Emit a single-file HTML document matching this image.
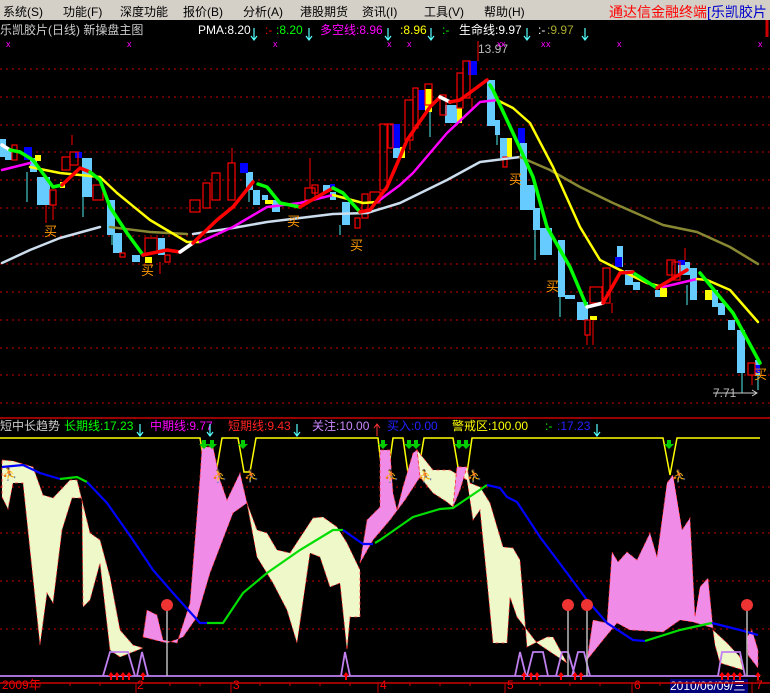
<!DOCTYPE html>
<html><head><meta charset="utf-8"><style>
*{margin:0;padding:0}
body{width:770px;height:693px;background:#000;overflow:hidden;position:relative;font-family:"Liberation Sans","Noto Sans CJK SC",sans-serif;font-size:12px}
.t{position:absolute;white-space:nowrap;line-height:14px}
#menu{position:absolute;left:0;top:0;width:770px;height:20px;background:#d4d0c8}
#menu span{position:absolute;top:3px;font-size:12px;color:#000}
</style></head><body>
<div id="menu">
<span style="left:3px">系统(S)</span><span style="left:63px">功能(F)</span><span style="left:120px">深度功能</span><span style="left:183px">报价(B)</span><span style="left:243px">分析(A)</span><span style="left:300px">港股期货</span><span style="left:362px">资讯(I)</span><span style="left:424px">工具(V)</span><span style="left:484px">帮助(H)</span>
<span style="left:609px;color:#f00;font-size:14px;top:2px">通达信金融终端</span><span style="left:707px;color:#00c;font-size:14px;top:2px">[乐凯胶片</span>
</div>
<div class="t" style="left:0;top:23px;color:#ccc">乐凯胶片(日线) 新操盘主图</div>
<div class="t" style="left:198px;top:23px;color:#fff">PMA:8.20</div>
<div class="t" style="left:265px;top:23px;color:#f00">:-</div><div class="t" style="left:276px;top:23px;color:#0f0">:8.20</div>
<div class="t" style="left:320px;top:23px;color:#f0f">多空线:8.96</div>
<div class="t" style="left:400px;top:23px;color:#ff0">:8.96</div>
<div class="t" style="left:442px;top:23px;color:#0f0">:-</div>
<div class="t" style="left:459px;top:23px;color:#fff">生命线:9.97</div>
<div class="t" style="left:538px;top:23px;color:#fff">:-</div><div class="t" style="left:547px;top:23px;color:#aa3">:9.97</div>

<div class="t" style="left:0;top:419px;color:#ccc">短中长趋势</div>
<div class="t" style="left:64px;top:419px;color:#0f0">长期线:17.23</div>
<div class="t" style="left:150px;top:419px;color:#f0f">中期线:9.77</div>
<div class="t" style="left:228px;top:419px;color:#f22">短期线:9.43</div>
<div class="t" style="left:312px;top:419px;color:#c8f">关注:10.00</div>
<div class="t" style="left:387px;top:419px;color:#22f">买入:0.00</div>
<div class="t" style="left:452px;top:419px;color:#ff0">警戒区:100.00</div>
<div class="t" style="left:545px;top:419px;color:#0f0">:-</div><div class="t" style="left:557px;top:419px;color:#22f">:17.23</div>

<div class="t" style="left:478px;top:42px;color:#bbb">13.97</div>
<div class="t" style="left:713px;top:386px;color:#bbb">7.71</div>

<div class="t" style="left:2px;top:678px;color:#f00">2009年</div>
<div class="t" style="left:137px;top:678px;color:#f00">2</div>
<div class="t" style="left:233px;top:678px;color:#f00">3</div>
<div class="t" style="left:380px;top:678px;color:#f00">4</div>
<div class="t" style="left:507px;top:678px;color:#f00">5</div>
<div class="t" style="left:634px;top:678px;color:#f00">6</div>
<div class="t" style="left:670px;top:679px;width:78px;height:14px;background:#00007a;color:#fff">2010/06/09/三</div>
<div class="t" style="left:756px;top:678px;color:#f00">7</div>

<svg width="770" height="693" style="position:absolute;left:0;top:0" xmlns="http://www.w3.org/2000/svg">
<g stroke="#5ff" stroke-width="1.2" fill="none">
<path d="M254 28v12M251 36l3 4 3-4M309 28v12M306 36l3 4 3-4M388 28v12M385 36l3 4 3-4M431 28v12M428 36l3 4 3-4M527 28v12M524 36l3 4 3-4M585 28v12M582 36l3 4 3-4"/>
<path d="M140 424v12M137 432l3 4 3-4M210 424v12M207 432l3 4 3-4M297 424v12M294 432l3 4 3-4M597 424v12M594 432l3 4 3-4"/>
</g>
<path d="M377 424v12M374 428l3-4 3 4" stroke="#f33" fill="none"/>
<line x1="767" y1="20" x2="767" y2="37" stroke="#c00" stroke-width="3"/>
<line x1="0" y1="418" x2="770" y2="418" stroke="#c00" stroke-width="1.5"/>
<line x1="0" y1="683" x2="770" y2="683" stroke="#c00" stroke-width="1.5"/>
<g stroke="#c00" stroke-width="1"><path d="M136 683v10M231 683v10M378 683v10M505 683v10M632 683v10M752 683v10M40 683v3M70 683v3M100 683v3M170 683v3M200 683v3M260 683v3M290 683v3M320 683v3M350 683v3M410 683v3M440 683v3M470 683v3M540 683v3M570 683v3M600 683v3M660 683v3M700 683v3"/></g>
<g stroke="#c00" stroke-dasharray="2,4" stroke-width="1">
<path d="M0 69H770M0 97H770M0 125H770M0 152H770M0 180H770M0 208H770M0 236H770M0 264H770M0 292H770M0 320H770M0 348H770M0 375H770M0 403H770"/>
<path d="M0 487H770M0 533H770M0 581H770M0 629H770"/>
</g>
<g fill="#f0f" font-size="9"><text x="6" y="47">x</text><text x="127" y="47">x</text><text x="273" y="47">x</text><text x="387" y="47">x</text><text x="407" y="47">x</text><text x="497" y="47">x</text><text x="501" y="47">x</text><text x="541" y="47">x</text><text x="546" y="47">x</text><text x="617" y="47">x</text><text x="758" y="47">x</text></g>
<!-- candles cyan -->
<g fill="#66ccff">
<rect x="0" y="139" width="6" height="18"/><rect x="5" y="150" width="7" height="10"/><rect x="30" y="158" width="7" height="14"/><rect x="37" y="177" width="13" height="28"/><rect x="82" y="158" width="10" height="39"/><rect x="107" y="200" width="8" height="35"/><rect x="113" y="233" width="9" height="20"/><rect x="132" y="255" width="8" height="7"/><rect x="158" y="238" width="7" height="17"/><rect x="246" y="172" width="7" height="18"/><rect x="253" y="190" width="7" height="15"/><rect x="262" y="195" width="6" height="5"/><rect x="272" y="200" width="8" height="12"/><rect x="323" y="185" width="7" height="7"/><rect x="330" y="192" width="6" height="8"/><rect x="342" y="202" width="8" height="23"/><rect x="393" y="148" width="7" height="10"/><rect x="445" y="105" width="12" height="18"/><rect x="487" y="80" width="8" height="46"/><rect x="495" y="120" width="5" height="15"/><rect x="500" y="138" width="7" height="20"/><rect x="520" y="143" width="7" height="67"/><rect x="527" y="185" width="8" height="25"/><rect x="533" y="208" width="7" height="22"/><rect x="540" y="228" width="12" height="27"/><rect x="558" y="240" width="7" height="57"/><rect x="565" y="295" width="10" height="4"/><rect x="577" y="302" width="11" height="18"/><rect x="617" y="246" width="6" height="21"/><rect x="625" y="270" width="8" height="15"/><rect x="633" y="282" width="7" height="8"/><rect x="655" y="290" width="7" height="7"/><rect x="678" y="262" width="12" height="13"/><rect x="690" y="268" width="7" height="32"/><rect x="712" y="290" width="6" height="17"/><rect x="718" y="303" width="7" height="12"/><rect x="728" y="320" width="7" height="10"/><rect x="737" y="330" width="8" height="43"/><rect x="755" y="360" width="5" height="15"/>
</g>
<g stroke="#5ee" stroke-width="1"><path d="M27 172v30M83 197v20M112 235v10M249 190v12M340 225v10M430 112v25M497 135v10M535 230v30M560 297v20M687 285v20M742 373v20M758 375v15"/></g>
<g fill="#ff0"><rect x="35" y="155" width="6" height="6"/><rect x="145" y="257" width="7" height="6"/><rect x="265" y="200" width="8" height="4"/><rect x="400" y="147" width="5" height="11"/><rect x="425" y="89" width="7" height="23"/><rect x="457" y="108" width="5" height="15"/><rect x="507" y="138" width="5" height="19"/><rect x="590" y="316" width="7" height="4"/><rect x="660" y="288" width="7" height="9"/><rect x="705" y="290" width="7" height="10"/><rect x="60" y="182" width="5" height="6"/></g>
<g fill="#00f"><rect x="24" y="147" width="8" height="13"/><rect x="75" y="152" width="7" height="6"/><rect x="240" y="163" width="8" height="10"/><rect x="330" y="184" width="5" height="6"/><rect x="392" y="124" width="8" height="24"/><rect x="418" y="90" width="7" height="20"/><rect x="468" y="61" width="9" height="14"/><rect x="518" y="128" width="7" height="15"/><rect x="615" y="257" width="7" height="10"/><rect x="678" y="260" width="7" height="5"/><rect x="755" y="365" width="5" height="8"/></g>
<g fill="none" stroke="#f00" stroke-width="1.2">
<rect x="12" y="145" width="5" height="15"/><rect x="50" y="190" width="6" height="15"/><rect x="62" y="157" width="8" height="13"/><rect x="70" y="152" width="8" height="13"/><rect x="93" y="185" width="10" height="15"/><rect x="120" y="253" width="5" height="4"/><rect x="145" y="238" width="12" height="15"/><rect x="165" y="255" width="5" height="7"/><rect x="190" y="200" width="10" height="12"/><rect x="203" y="183" width="7" height="25"/><rect x="212" y="173" width="8" height="27"/><rect x="228" y="163" width="7" height="37"/><rect x="305" y="188" width="10" height="12"/><rect x="312" y="185" width="6" height="8"/><rect x="355" y="218" width="5" height="10"/><rect x="362" y="194" width="6" height="24"/><rect x="370" y="192" width="10" height="11"/><rect x="380" y="124" width="7" height="66"/><rect x="388" y="124" width="5" height="24"/><rect x="405" y="100" width="8" height="40"/><rect x="413" y="88" width="5" height="40"/><rect x="425" y="84" width="7" height="21"/><rect x="440" y="95" width="6" height="20"/><rect x="457" y="73" width="6" height="35"/><rect x="463" y="61" width="7" height="37"/><rect x="503" y="157" width="4" height="10"/><rect x="585" y="320" width="5" height="15"/><rect x="590" y="287" width="12" height="16"/><rect x="603" y="268" width="7" height="35"/><rect x="667" y="260" width="8" height="15"/><rect x="672" y="262" width="8" height="18"/><rect x="748" y="363" width="7" height="12"/>
</g>
<g stroke="#f00" stroke-width="1"><path d="M46 205v18M53 205v15M160 262v12M72 145v-10M232 163v-15M310 188v-30M478 61v-20M587 335v10M612 303v10M727 215v0M593 320v25M752 375v10M685 260v-12M410 140v10M472 98v12"/></g>
<!-- MAs -->
<g fill="none" stroke-width="2.5" stroke-linejoin="round" stroke-linecap="round">
<polyline stroke="#cde" points="2,263 30,250 60,238 100,227"/>
<polyline stroke="#888833" points="110,227 150,232 187,234"/>
<polyline stroke="#cde" points="193,234 233,228 267,222 333,214 367,213 400,203 447,180 480,162 520,157"/>
<polyline stroke="#888833" points="520,157 550,170 580,187 613,203 663,225 697,232 730,247 758,264"/>
<polyline stroke="#f0f" points="2,170 30,163"/>
<polyline stroke="#ff0" points="30,167 60,173 100,177 117,193 150,220 187,242 200,242"/>
<polyline stroke="#f0f" points="200,242 233,227 267,207 300,203 333,195"/>
<polyline stroke="#ff0" points="333,195 363,203 377,202"/>
<polyline stroke="#f0f" points="377,202 400,185 413,173 447,133 480,102 497,100"/>
<polyline stroke="#ff0" points="497,100 513,108 530,123 553,167 580,227 600,260 620,270 647,283 663,287"/>
<polyline stroke="#f0f" points="663,287 697,279"/>
<polyline stroke="#ff0" points="697,279 707,280 730,290 758,322"/>
</g>
<g fill="none" stroke-width="3.5" stroke-linejoin="round" stroke-linecap="round">
<polyline stroke="#fff" points="2,145 10,150"/>
<polyline stroke="#0f0" points="10,150 20,152 33,160 53,187 62,185"/>
<polyline stroke="#f00" points="62,185 80,168 90,172"/>
<polyline stroke="#0f0" points="90,172 100,180 110,207 127,233 143,255"/>
<polyline stroke="#f00" points="143,255 167,250 180,252"/>
<polyline stroke="#fff" points="180,252 193,243"/>
<polyline stroke="#f00" points="193,243 217,220 233,207 253,182"/>
<polyline stroke="#0f0" points="258,184 267,187 280,203 300,207"/>
<polyline stroke="#f00" points="300,207 317,197 333,188"/>
<polyline stroke="#0f0" points="333,188 343,193 360,212"/>
<polyline stroke="#f00" points="360,212 370,210 387,187 400,157 407,140 430,107 440,97"/>
<polyline stroke="#fff" points="440,97 450,102"/>
<polyline stroke="#f00" points="450,102 460,100 487,80"/>
<polyline stroke="#0f0" points="490,85 493,90 513,133 533,177 547,227 570,267 587,307"/>
<polyline stroke="#fff" points="587,307 603,303"/>
<polyline stroke="#f00" points="603,303 620,273 633,272"/>
<polyline stroke="#0f0" points="635,274 657,288"/>
<polyline stroke="#f00" points="657,288 687,270"/>
<polyline stroke="#0f0" points="700,273 733,313 760,363"/>
</g>
<path d="M713 393H757M752 390l5 3-5 3" stroke="#ccc" fill="none"/>
<g fill="#f90" font-size="13"><text x="44" y="236">买</text><text x="141" y="275">买</text><text x="287" y="226">买</text><text x="350" y="250">买</text><text x="509" y="184">买</text><text x="546" y="291">买</text><text x="754" y="379">买</text></g>
<!-- lower pane -->
<path d="M0 438H200L206 473H216L222 438H238L244 472H250L256 438H378L382 473H388L393 438H403L408 473H418L424 438H453L459 473H467L472 438H663L670 475L677 438H760" stroke="#ff0" stroke-width="1.5" fill="none"/>
<g fill="#eff8c8" stroke="#f33" stroke-width="0.8" stroke-dasharray="3,3">
<polygon points="2,460 13,461 33,467 43,495 53,498 70,480 77,480 90,533 100,540 110,577 120,630 133,645 143,648 120,657 110,650 100,563 90,600 83,607 82,498 72,498 62,530 53,603 47,593 40,645 23,483 13,483 8,509 2,497"/>
<polygon points="247,503 257,530 267,533 277,550 290,553 313,518 323,517 337,527 347,543 360,570 360,617 350,617 347,650 340,583 330,587 320,557 310,553 297,643 287,610 273,583 257,557"/>
<polygon points="417,450 420,477 433,493 447,502 453,507 457,467 467,467 470,483 480,487 490,503 503,547 513,548 520,560 527,647 547,637 553,637 567,663 537,643 517,617 510,597 507,643 493,643 487,580 480,510 473,520 467,480 450,470 433,470"/>
<polygon points="713,630 727,643 740,657 743,670 720,663 715,645"/>
</g>
<g fill="#f08ce8" stroke="#f33" stroke-width="0.8" stroke-dasharray="3,3">
<polygon points="143,637 147,610 157,615 163,640 177,643 190,603 200,477 202,447 213,447 220,480 227,500 240,473 247,503 233,513 210,573 197,617 183,637 167,643"/>
<polygon points="360,563 367,520 380,507 380,450 390,450 393,493 397,510 403,487 413,453 417,450 420,477 405,500 390,520 373,540"/>
<polygon points="453,507 457,467 467,467 460,490"/>
<polygon points="587,660 593,620 607,623 612,552 618,562 627,552 637,560 650,533 657,557 667,483 673,475 682,530 690,518 695,617 700,587 708,578 713,628 693,622 680,620 663,632 630,630 617,623 603,640"/>
<polygon points="747,637 752,630 758,650 758,668 748,655"/>
</g>
<g fill="none" stroke-width="2.2">
<polyline stroke="#00f" points="2,467 23,465 40,473 60,479"/>
<polyline stroke="#0d0" points="60,479 77,477 87,482"/>
<polyline stroke="#00f" points="87,482 107,503 133,540 153,570 173,593 200,623 207,623"/>
<polyline stroke="#0d0" points="207,623 223,623 243,593 267,573 300,550 333,530 343,530"/>
<polyline stroke="#00f" points="343,530 363,544 373,544"/>
<polyline stroke="#0d0" points="375,543 380,540 413,517 440,509 453,508 487,485"/>
<polyline stroke="#00f" points="487,485 500,488 507,497 517,502 540,537 567,573 587,600 607,623 633,640 645,641"/>
<polyline stroke="#0d0" points="645,641 680,630 707,624 712,623"/>
<polyline stroke="#00f" points="712,623 740,630 758,635"/>
</g>
<g fill="none" stroke="#c080f0" stroke-width="1.8">
<path d="M0 676H760"/>
<path d="M103 676L110 652H128L135 676M137 676L142 652L148 676M341 676L345 652L350 676M515 676L520 652L526 676M527 676L533 652H543L548 676M556 676L562 652H568L575 676M572 676L578 652H584L590 676M718 676L722 652H740L745 676"/>
</g>
<g fill="#f00"><path d="M108 676l3-4 3 4h-2v4h-2v-4zM114 676l3-4 3 4h-2v4h-2v-4zM120 676l3-4 3 4h-2v4h-2v-4zM126 676l3-4 3 4h-2v4h-2v-4zM140 676l3-4 3 4h-2v4h-2v-4zM343 676l3-4 3 4h-2v4h-2v-4zM521 676l3-4 3 4h-2v4h-2v-4zM528 676l3-4 3 4h-2v4h-2v-4zM534 676l3-4 3 4h-2v4h-2v-4zM558 676l3-4 3 4h-2v4h-2v-4zM572 676l3-4 3 4h-2v4h-2v-4zM578 676l3-4 3 4h-2v4h-2v-4zM719 676l3-4 3 4h-2v4h-2v-4zM725 676l3-4 3 4h-2v4h-2v-4zM731 676l3-4 3 4h-2v4h-2v-4zM737 676l3-4 3 4h-2v4h-2v-4zM755 676l3-4 3 4h-2v4h-2v-4z"/></g>
<g stroke="#bbb" stroke-width="1.5"><path d="M167 605V676M568 605V676M587 605V676M747 605V676"/></g>
<g fill="#e33"><circle cx="167" cy="605" r="6"/><circle cx="568" cy="605" r="6"/><circle cx="587" cy="605" r="6"/><circle cx="747" cy="605" r="6"/></g>
<g fill="#0c0"><path d="M202 440h4v4h3l-5 5-5-5h3zM210 440h4v4h3l-5 5-5-5h3zM241 440h4v4h3l-5 5-5-5h3zM381 440h4v4h3l-5 5-5-5h3zM407 440h4v4h3l-5 5-5-5h3zM414 440h4v4h3l-5 5-5-5h3zM457 440h4v4h3l-5 5-5-5h3zM464 440h4v4h3l-5 5-5-5h3zM667 440h4v4h3l-5 5-5-5h3z"/></g>
<g fill="#e8a040" font-size="12"><text x="2" y="478">⛹</text><text x="212" y="480">⛹</text><text x="244" y="480">⛹</text><text x="384" y="480">⛹</text><text x="418" y="480">⛹</text><text x="467" y="480">⛹</text><text x="672" y="480">⛹</text></g>
</svg>
</body></html>
